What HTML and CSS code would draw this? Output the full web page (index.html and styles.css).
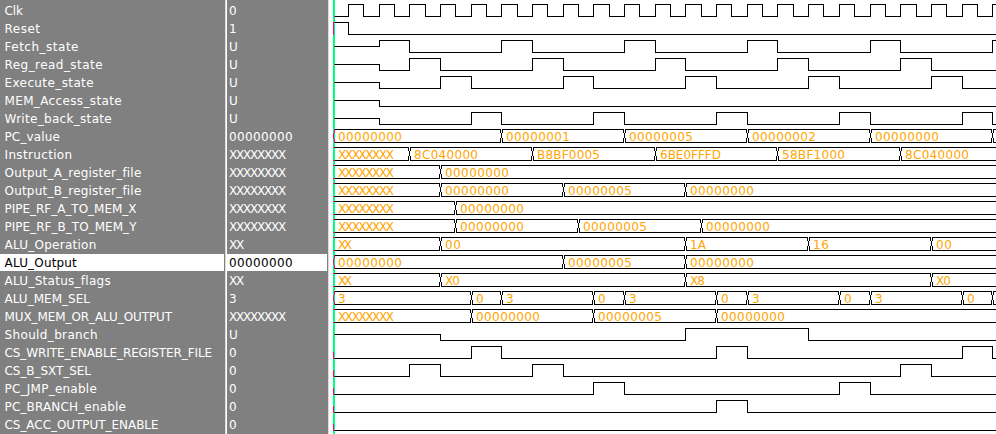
FILE: index.html
```html
<!DOCTYPE html>
<html lang="en">
<head>
<meta charset="utf-8">
<title>Waveforms</title>
<link rel="stylesheet" href="styles.css">
</head>
<body>
<main class="viewer">
  <section class="names" id="names"></section>
  <section class="values" id="values"></section>
  <section class="waves" id="waves"></section>
</main>
<script src="waves.js"></script>
</body>
</html>
```
FILE: styles.css
```css
* { box-sizing: border-box; }
body {
  margin: 0;
  background: #fff;
  font-family: "DejaVu Sans", sans-serif;
  font-size: 12px;
  overflow: hidden;
}
.viewer {
  display: grid;
  grid-template-columns: 226px 103px 667px;
  height: 434px;
  overflow: hidden;
}
.names, .values {
  padding-top: 2px;
  background: #808080;
  color: #fff;
  height: 434px;
  overflow: hidden;
}
.names { border-right: 1px solid #dedbd7; }
.values { border-left: 1px solid #fff; border-right: 1px solid #dedbd7; }
.cell {
  height: 17px;
  margin-right: 1px;
  margin-bottom: 1px;
  line-height: 19px;
  white-space: pre;
}
.names .cell { padding-left: 4.5px; }
.values .cell { padding-left: 2px; }
.cell.selected { background: #fff; color: #000; }
.cell span { display: inline-block; }
.waves { height: 434px; overflow: hidden; }
.wave { display: block; width: 667px; height: 18px; overflow: visible; }
.line { fill: none; stroke: #000; stroke-width: 1; shape-rendering: crispEdges; }
.label { fill: #ffa500; }
.cursor { fill: #00ff80; }
.mark { fill: #ff007f; shape-rendering: crispEdges; }
```
FILE: waves.js
```js
const LEFT = 329;
const END = 1000;
// Screen position of each half clock period.
const T = [333, 348, 363, 379, 394, 409, 425, 440, 455, 471, 486, 501, 517, 532, 547,
  563, 578, 593, 609, 624, 639, 655, 670, 685, 701, 716, 731, 747, 762, 777, 793, 808,
  823, 839, 854, 870, 885, 900, 916, 931, 946, 962, 977, 992];
const Z = '00000000', X = 'XXXXXXXX', F = '00000005';

const clock = T.map((_, i) => [i, i % 2]);
// name, right edge of name, value, [time, level or text] changes
const signals = [
  ['Clk', 23, '0', clock],
  ['Reset', 40.5, '1', [[0, 1], [1, 0]]],
  ['Fetch_state', 79, 'U', [[0, .5], [3, 1], [5, 0], [11, 1], [13, 0], [19, 1], [21, 0], [27, 1], [29, 0], [35, 1], [37, 0], [43, 1]]],
  ['Reg_read_state', 103, 'U', [[0, .5], [3, 0], [5, 1], [7, 0], [13, 1], [15, 0], [21, 1], [23, 0], [29, 1], [31, 0], [37, 1], [39, 0]]],
  ['Execute_state', 94, 'U', [[0, .5], [3, 0], [7, 1], [9, 0], [15, 1], [17, 0], [23, 1], [25, 0], [31, 1], [33, 0], [39, 1], [41, 0]]],
  ['MEM_Access_state', 122, 'U', [[0, .5], [3, 0]]],
  ['Write_back_state', 112, 'U', [[0, .5], [3, 0], [9, 1], [11, 0], [17, 1], [19, 0], [25, 1], [27, 0], [33, 1], [35, 0], [41, 1], [43, 0]]],
  ['PC_value', 60, Z, [[0, Z], [11, '00000001'], [19, F], [27, '00000002'], [35, Z], [43, '']]],
  ['Instruction', 72.5, X, [[0, X], [5, '8C040000'], [13, 'B8BF0005'], [21, '6BE0FFFD'], [29, '58BF1000'], [37, '8C040000']]],
  ['Output_A_register_file', 141.5, X, [[0, X], [7, Z]]],
  ['Output_B_register_file', 141.5, X, [[0, X], [7, Z], [15, F], [23, Z]]],
  ['PIPE_RF_A_TO_MEM_X', 136.5, X, [[0, X], [8, Z]]],
  ['PIPE_RF_B_TO_MEM_Y', 136.5, X, [[0, X], [8, Z], [16, F], [24, Z]]],
  ['ALU_Operation', 96.5, 'XX', [[0, 'XX'], [7, '00'], [23, '1A'], [31, '16'], [39, '00']]],
  ['ALU_Output', 77, Z, [[0, Z], [15, F], [23, Z]]],
  ['ALU_Status_flags', 111, 'XX', [[0, 'XX'], [7, 'X0'], [23, 'X8'], [39, 'X0']]],
  ['ALU_MEM_SEL', 90, '3', [[0, '3'], [9, '0'], [11, '3'], [17, '0'], [19, '3'], [25, '0'], [27, '3'], [33, '0'], [35, '3'], [41, '0'], [43, '']]],
  ['MUX_MEM_OR_ALU_OUTPUT', 172, X, [[0, X], [9, Z], [17, F], [25, Z]]],
  ['Should_branch', 98, 'U', [[0, .5], [7, 0], [23, 1], [31, 0]]],
  ['CS_WRITE_ENABLE_REGISTER_FILE', 212, '0', [[0, 0], [9, 1], [11, 0], [25, 1], [27, 0], [41, 1], [43, 0]]],
  ['CS_B_SXT_SEL', 91, '0', [[0, 0], [5, 1], [7, 0], [13, 1], [15, 0], [37, 1], [39, 0]]],
  ['PC_JMP_enable', 97, '0', [[0, 0], [17, 1], [19, 0], [33, 1], [35, 0]]],
  ['PC_BRANCH_enable', 126, '0', [[0, 0], [25, 1], [27, 0]]],
  ['CS_ACC_OUTPUT_ENABLE', 158.5, '0', [[0, 0]]],
];

// Whole-pixel advances of the readout digits.
function readoutWidth(text) {
  return [...text].reduce((w, c) => w + (/[XF]/.test(c) ? 7 : 8), 0);
}

function addCell(parent, text, width, selected) {
  const cell = document.createElement('div');
  cell.className = selected ? 'cell selected' : 'cell';
  const span = document.createElement('span');
  span.textContent = text;
  cell.append(span);
  parent.append(cell);
  const natural = span.getBoundingClientRect().width;
  span.style.letterSpacing = (width - natural) / text.length + 'px';
}

const rect = (x, y, w, h) => `<rect class="mark" x="${x - LEFT}" y="${y}" width="${w}" height="${h}"/>`;
const y = level => 16.5 - 12 * level;

function drawBit(changes) {
  let d = '';
  changes.forEach(([t, level], i) => {
    const x = i ? T[t] - LEFT + .5 : 5;
    d += i ? `H${x}V${y(level)}` : `M${x} ${y(level)}`;
  });
  const first = changes[0][1];
  const marks = rect(334, y(first) - .5, 1, 1);
  return [`<path class="line" d="${d}H${END - LEFT}"/>`, marks];
}

function drawBus(changes) {
  let d = '', labels = '';
  changes.forEach(([t, text], i) => {
    const a = i ? T[t] + 1 : 334;
    const next = changes[i + 1];
    const b = next ? T[next[0]] : END;
    d += `M${a - LEFT} 3.5H${b - LEFT}M${a - LEFT} 16.5H${b - LEFT}`;
    if (i) {
      const x = T[t] - LEFT + .5;
      d += `M${x - 1} 3V7M${x + 1} 3V7M${x} 7V12M${x - 1} 12V17M${x + 1} 12V17`;
    }
    if (text) labels += `<text class="label" x="${T[t] + 5 - LEFT}" y="15" textLength="${readoutWidth(text)}">${text}</text>`;
  });
  const marks = changes[0][1][0] === 'X'
    ? rect(333, 3, 2, 1) + rect(333, 16, 2, 1)
    : rect(334, 3, 1, 4) + rect(333, 7, 1, 6) + rect(334, 13, 1, 4);
  return [`<path class="line" d="${d}"/>${labels}`, marks];
}

const names = document.getElementById('names');
const values = document.getElementById('values');
const waves = document.getElementById('waves');
let html = '';
signals.forEach(([name, right, value, changes]) => {
  const selected = name === 'ALU_Output';
  addCell(names, name, right - 4.5, selected);
  addCell(values, value, readoutWidth(value), selected);
  const bus = typeof changes[0][1] === 'string';
  let [drawing, marks] = bus ? drawBus(changes) : drawBit(changes);
  if (name === 'Reset') marks += rect(333, 4, 1, 13);
  else if (!bus && changes[0][1] === 0 && name !== 'Clk') marks += rect(333, 10, 1, 7);
  html += `<svg class="wave" viewBox="0 0 667 18">${drawing}<rect class="cursor" x="4" y="0" width="2" height="20"/>${marks}</svg>`;
});
waves.innerHTML = html;
```
